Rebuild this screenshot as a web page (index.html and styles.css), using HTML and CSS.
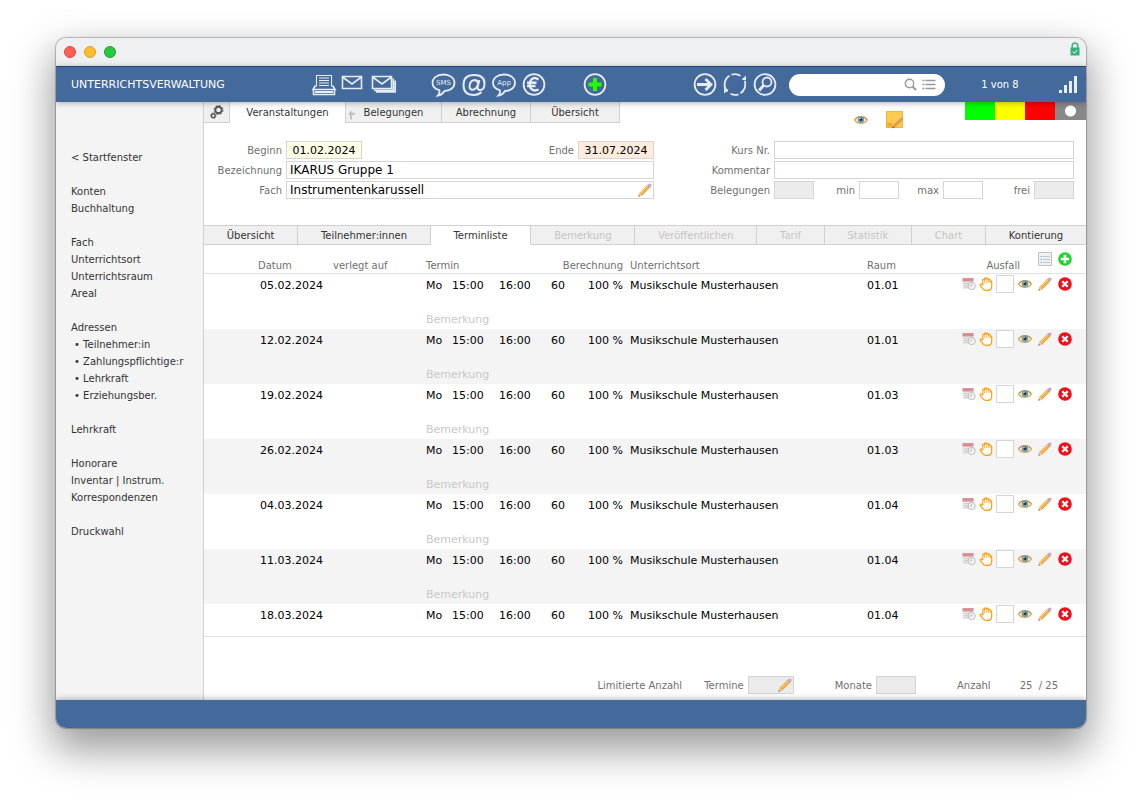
FILE: index.html
```
<!DOCTYPE html>
<html lang="de">
<head>
  <meta charset="UTF-8">
  <meta name="viewport" content="width=device-width, initial-scale=1.0">
  <title>Unterrichtsverwaltung</title>
  <link rel="stylesheet" href="styles.css">
</head>
<body>
  <!-- shared icons -->
  <svg class="sprite" aria-hidden="true">
    <symbol id="i-eye" viewBox="0 0 14 10">
      <path d="M.5 5C3 1 10.500 .6 13.500 4.800 10.500 9.400 3.500 9.400 .5 5z" fill="#f3e6cd" stroke="#dba95a" stroke-width="1.300"/>
      <path d="M1 4.200C3.500 .8 10 .6 13 4.200" fill="none" stroke="#c08f4a"/>
      <circle cx="7" cy="4.800" r="3.200" fill="#6d9bb0"/>
      <circle cx="7" cy="4.700" r="1.400" fill="#1c323c"/>
      <circle cx="6" cy="3.600" r=".6" fill="#fff"/>
    </symbol>
    <symbol id="i-pencil" viewBox="0 0 14 14">
      <path d="M.6 13.400L1.600 10 10.200 1.400 12.700 3.800 4 12.400z" fill="#f4ab3d" stroke="#d09a50" stroke-width=".4"/>
      <path d="M2.400 10.600L10.800 2.200" stroke="#fbd58b"/>
      <path d="M.5 13.500L1.700 10.300 3.700 12.300z" fill="#ecd9c0"/>
      <path d="M.4 13.600L1 12l1 1z" fill="#555"/>
      <path d="M9.500 2.200L11 .8q1-.8 2.100.2t0 2.300L11.700 4.700z" fill="#cfa3cf"/>
      <path d="M9.400 2.400l2.200 2.200" stroke="#aab" stroke-width=".8"/>
    </symbol>
    <symbol id="i-delete" viewBox="0 0 14 14">
      <circle cx="7" cy="7" r="6.800" fill="#f0101a"/>
      <path d="M4.300 4.300l5.400 5.400M9.700 4.300L4.300 9.700" stroke="#fff" stroke-width="2.300"/>
    </symbol>
    <symbol id="i-add" viewBox="0 0 14 14">
      <circle cx="7" cy="7" r="6.800" fill="#1fd32b"/>
      <path d="M7 2.800v8.400M2.800 7h8.400" stroke="#fff" stroke-width="2.600"/>
    </symbol>
    <symbol id="i-hand" viewBox="0 0 14 15">
      <path d="M3.600 8.500V3.200q0-.9.900-.9t.9.900V2q0-1 1-1t1 1v.3q0-.9 1-.9t1 .9v1q.1-.8 1-.8t1 .9V5q.1-.7.900-.7t.8.900V10q0 4.300-4.300 4.300H7q-2 0-3.200-1.600L.8 9Q.4 8.200 1 7.700t1.400 0z" fill="#fff" stroke="#f90" stroke-width="1.200" stroke-linejoin="round"/>
      <path d="M5.400 3v3.500M7.400 2.500v4M9.400 3v3.500M11.400 4.500v2.500" stroke="#fa3" stroke-width=".8"/>
    </symbol>
    <symbol id="i-calendar" viewBox="0 0 14 14">
      <path d="M.5 1h11v11H.5z" fill="#e6e6e6"/>
      <path d="M.5 1h11v3.500H.5z" fill="#dd8b92"/>
      <path d="M1 1.500h10" stroke="#c9a5a8" stroke-dasharray="1 1"/>
      <path d="M2 6.500h7M2 8.500h5M2 10.300h4" stroke="#d0d0d0"/>
      <circle cx="9.700" cy="9" r="3.600" fill="#f5f5f5" stroke="#bbb"/>
      <path d="M9.700 6.800V9h-2" fill="none" stroke="#b5b5b5" stroke-width=".9"/>
    </symbol>
    <symbol id="i-list" viewBox="0 0 14 14">
      <rect x=".5" y=".5" width="13" height="13" rx=".5" fill="#eef1f4" stroke="#bfc1c4"/>
      <path d="M5 4.500h7M5 7.500h7M5 10.500h7" stroke="#b4bfca" stroke-width=".8"/>
      <path d="M2.500 4.500h1.500M2.500 7.500h1.500M2.500 10.500h1.500" stroke="#86aed8"/>
    </symbol>
  </svg>

  <div class="window">
    <div class="titlebar">
      <span class="dot red"></span>
      <span class="dot orange"></span>
      <span class="dot green"></span>
      <svg class="lock" viewBox="0 0 10 14">
        <path d="M2.200 6V4q0-3 2.800-3t2.800 3v2" fill="none" stroke="#35b07e" stroke-width="1.500"/>
        <rect x=".5" y="5.500" width="9" height="8" fill="#35b07e"/>
        <path d="M2.800 9.600l1.600 1.600 2.800-3.200" fill="none" stroke="#fff"/>
      </svg>
    </div>

    <header class="toolbar">
      <h1>UNTERRICHTSVERWALTUNG</h1>
      <div class="tools">
        <button aria-label="Drucken"><svg class="thin" viewBox="0 0 30 30">
          <path d="M7.500 16.500v-11h15v11M10 8h10M10 10.500h10M10 13h10M10 15.500h10"/>
          <path d="M6.500 15.500L4 19.500h22l-2.500-4M4.500 19.500v5h21v-5" stroke-width="1.600"/>
          <path d="M6 22h18" stroke-width="2"/>
        </svg></button>
        <button aria-label="E-Mail"><svg viewBox="0 0 30 30">
          <path d="M3.500 6.500h19v12h-19zM3.500 7l9.500 7L22.500 7" stroke-width="1.600"/>
        </svg></button>
        <button aria-label="Serien-E-Mail"><svg viewBox="0 0 30 30">
          <path d="M3.500 6.500h19v12h-19zM3.500 7l9.500 7L22.500 7" stroke-width="1.600"/>
          <path d="M5 20.300h19.300V8.500M7 22h19.200V10.500" stroke-width="1.700"/>
        </svg></button>
      </div>
      <div class="tools messages">
        <button aria-label="SMS"><svg viewBox="0 0 30 30">
          <path d="M14.500 4.500c6.500 0 11 3.500 11 8.300s-4.500 8.200-10 8.200q-2.500 4-6.500 4.500 2-2 1.300-5.300C6 19 3.500 16.500 3.500 12.800c0-4.800 4.500-8.300 11-8.300z"/>
          <text x="14.500" y="15" text-anchor="middle">SMS</text>
        </svg></button>
        <button aria-label="At"><svg viewBox="0 0 30 30">
          <path d="M22.500 22q-3 3-7.500 3Q4.500 25 4.500 15T15 5q10.500 0 10.500 8.500 0 6.500-4.500 6.500-3 0-2.200-3.500L20.300 10M19 13.500Q18.500 10 15.500 10q-4.500.5-5 6 0 3.800 3 3.800 4-.3 5.300-5" stroke-width="2"/>
        </svg></button>
        <button aria-label="App"><svg viewBox="0 0 30 30">
          <path d="M15 4.500c6.500 0 11 3.500 11 8.300S21.500 21 16 21q-2.500 4-6.500 4.500 2-2 1.300-5.300C6.500 19 4 16.500 4 12.800c0-4.800 4.500-8.300 11-8.300z"/>
          <text x="15" y="15" text-anchor="middle">App</text>
        </svg></button>
        <button aria-label="Euro"><svg viewBox="0 0 30 30">
          <circle cx="15" cy="14.500" r="10.400"/>
          <path d="M19.500 9.500q-6-4-8.500 2.500-1 3 .5 6 3 4 8 1.500M8 12.800h9.500M8 16h8.500" stroke-width="2.400"/>
        </svg></button>
      </div>
      <div class="tools new">
        <button aria-label="Neu"><svg viewBox="0 0 30 30">
          <circle cx="15" cy="14.500" r="10.400"/>
          <path d="M15 8v13M8.500 14.500h13" stroke="#2f0" stroke-width="4"/>
        </svg></button>
      </div>
      <div class="tools navigate">
        <button aria-label="Weiter"><svg viewBox="0 0 30 30">
          <circle cx="15" cy="14.500" r="10.400"/>
          <path d="M7 14.500h14M15.500 9l5.500 5.500-5.500 5.500" stroke-width="2.800"/>
        </svg></button>
        <button aria-label="Aktualisieren"><svg viewBox="0 0 30 30">
          <path d="M7.500 21.700A10.400 10.400 0 0 1 9.500 5.700M11.500 4.700A10.400 10.400 0 0 1 20.500 5.700M24.800 11A10.400 10.400 0 0 1 20.500 23.300M18.500 24.300A10.400 10.400 0 0 1 10.500 23.800"/>
          <path d="M21.500 9.500l4.500 1V5.500zM8.500 19.500l-4.500-1v5z" fill="#e6edf7" stroke="none"/>
        </svg></button>
        <button aria-label="Suchen"><svg viewBox="0 0 30 30">
          <circle cx="15" cy="14.500" r="10.400"/>
          <circle cx="17" cy="12" r="4.500"/>
          <path d="M13.800 15.300L9 20.500" stroke-width="2.800"/>
        </svg></button>
      </div>
      <label class="search">
        <input type="search" aria-label="Suche">
        <svg viewBox="0 0 34 14">
          <circle cx="6.500" cy="5.500" r="4.200"/>
          <path d="M9.500 8.500L13 12" stroke-width="2"/>
          <path d="M22.500 2.500h10M22.500 6.500h10M22.500 10.500h10M19.500 2.500h2M19.500 6.500h2M19.500 10.500h2"/>
        </svg>
      </label>
      <span class="count">1 von 8</span>
      <svg class="signal" viewBox="0 0 20 20">
        <path d="M1 15h3v3H1zM6 10h3v8H6zM11 6h3v12h-3zM16 1h3v17h-3z"/>
      </svg>
    </header>

    <div class="content">
      <nav class="sidebar">
        <ul>
          <li><a href="#">&lt; Startfenster</a></li>
        </ul>
        <ul>
          <li><a href="#">Konten</a></li>
          <li><a href="#">Buchhaltung</a></li>
        </ul>
        <ul>
          <li><a href="#">Fach</a></li>
          <li><a href="#">Unterrichtsort</a></li>
          <li><a href="#">Unterrichtsraum</a></li>
          <li><a href="#">Areal</a></li>
        </ul>
        <ul>
          <li><a href="#">Adressen</a></li>
          <li class="sub"><a href="#">• Teilnehmer:in</a></li>
          <li class="sub"><a href="#">• Zahlungspflichtige:r</a></li>
          <li class="sub"><a href="#">• Lehrkraft</a></li>
          <li class="sub"><a href="#">• Erziehungsber.</a></li>
        </ul>
        <ul>
          <li><a href="#">Lehrkraft</a></li>
        </ul>
        <ul>
          <li><a href="#">Honorare</a></li>
          <li><a href="#">Inventar | Instrum.</a></li>
          <li><a href="#">Korrespondenzen</a></li>
        </ul>
        <ul>
          <li><a href="#">Druckwahl</a></li>
        </ul>
      </nav>

      <main>
        <div class="top">
          <div class="main-tabs">
            <button aria-label="Einstellungen"><svg class="gears" viewBox="0 0 14 14">
              <circle cx="8.500" cy="5" r="3.200" stroke-width="1.900"/>
              <circle cx="8.500" cy="5" r="4.500" stroke-width="1" stroke-dasharray="1.800 1.730"/>
              <circle cx="3.300" cy="10.700" r="1.900" stroke-width="1.400"/>
              <circle cx="3.300" cy="10.700" r="2.800" stroke-width=".7" stroke-dasharray="1.100 1.100"/>
            </svg></button>
            <button class="active">Veranstaltungen</button>
            <button>
              <svg class="turn" viewBox="0 0 8 10"><path d="M3 9.500V5.500q0-2 4-2" fill="none" stroke="#c4c4c4" stroke-width="2"/><path d="M0 5l3-4.500L5.500 5z" fill="#c4c4c4"/></svg>
              Belegungen
            </button>
            <button>Abrechnung</button>
            <button>Übersicht</button>
          </div>
          <div class="marks">
            <svg class="eye"><use href="#i-eye"/></svg>
            <svg class="note" viewBox="0 0 18 18">
              <rect x=".5" y=".5" width="16" height="16" fill="#fccb50" stroke="#e8b74a"/>
              <path d="M1 11.500h4.500l1 1V16.500H1z" fill="#f5b428"/>
              <path d="M2 12.500q2 2 4 1.500" fill="none" stroke="#d99a20" stroke-width=".7"/>
              <path d="M6.500 17L8 13.500l7-6.300 1.700 1.500L9.500 15.500z" fill="#f59a4a" stroke="#b98d60" stroke-width=".5"/>
              <path d="M6.300 17.200l.8-1.900 1.200 1.100z" fill="#555"/>
              <path d="M14.700 7.300l1.500-1.300 1.700 1.400-1.400 1.400z" fill="#c9a0d4"/>
            </svg>
          </div>
          <div class="status">
            <span class="go"></span>
            <span class="wait"></span>
            <span class="stop"></span>
            <span class="off"></span>
          </div>
        </div>

        <form class="course">
          <div class="fields">
            <label for="begin">Beginn</label>
            <div class="line">
              <input id="begin" class="date begin" value="01.02.2024">
              <label for="end">Ende</label>
              <input id="end" class="date end" value="31.07.2024">
            </div>
            <label for="name">Bezeichnung</label>
            <input id="name" class="big" value="IKARUS Gruppe 1">
            <label for="subject">Fach</label>
            <div class="with-icon">
              <input id="subject" class="big" value="Instrumentenkarussell">
              <svg class="pencil"><use href="#i-pencil"/></svg>
            </div>
          </div>
          <div class="fields right">
            <label for="number">Kurs Nr.</label>
            <input id="number">
            <label for="comment">Kommentar</label>
            <input id="comment">
            <label for="booked">Belegungen</label>
            <div class="counts">
              <input id="booked" class="small" disabled>
              <label for="min">min</label>
              <input id="min" class="small">
              <label for="max">max</label>
              <input id="max" class="small">
              <label for="free">frei</label>
              <input id="free" class="small" disabled>
            </div>
          </div>
        </form>

        <div class="sub-tabs">
          <button>Übersicht</button>
          <button>Teilnehmer:innen</button>
          <button class="active">Terminliste</button>
          <button disabled>Bemerkung</button>
          <button disabled>Veröffentlichen</button>
          <button disabled>Tarif</button>
          <button disabled>Statistik</button>
          <button disabled>Chart</button>
          <button>Kontierung</button>
        </div>

        <div class="list">
          <table>
            <colgroup>
              <col class="c-pad"><col class="c-date"><col class="c-moved"><col class="c-day">
              <col class="c-from"><col class="c-to"><col class="c-min"><col class="c-rate">
              <col><col class="c-room"><col class="c-actions">
            </colgroup>
            <thead>
              <tr>
                <th></th>
                <th>Datum</th>
                <th>verlegt auf</th>
                <th colspan="3">Termin</th>
                <th colspan="2" class="rate">Berechnung</th>
                <th>Unterrichtsort</th>
                <th>Raum</th>
                <th>
                  <div class="head-actions">
                    <span>Ausfall</span>
                    <button aria-label="Liste"><svg><use href="#i-list"/></svg></button>
                    <button aria-label="Termin hinzufügen"><svg><use href="#i-add"/></svg></button>
                  </div>
                </th>
              </tr>
            </thead>
          </table>
        </div>

        <div class="summary">
          <span>Limitierte Anzahl</span>
          <label for="dates">Termine</label>
          <div class="with-icon">
            <input id="dates" class="limit" disabled>
            <svg class="pencil"><use href="#i-pencil"/></svg>
          </div>
          <label for="months" class="months">Monate</label>
          <input id="months" class="small" disabled>
          <span class="total">Anzahl</span>
          <span>25 &nbsp;/ 25</span>
        </div>
      </main>
    </div>
    <footer></footer>
  </div>

  <script>
    const dates = [
      ['05.02.2024', '01.01'],
      ['12.02.2024', '01.01'],
      ['19.02.2024', '01.03'],
      ['26.02.2024', '01.03'],
      ['04.03.2024', '01.04'],
      ['11.03.2024', '01.04'],
      ['18.03.2024', '01.04']
    ];
    const table = document.querySelector('.list table');
    const icon = (name, label) =>
      `<button aria-label="${label}"><svg><use href="#i-${name}"/></svg></button>`;

    dates.forEach(([date, room]) => {
      const body = document.createElement('tbody');
      body.innerHTML = `
        <tr>
          <td></td>
          <td class="date-cell">${date}</td>
          <td></td>
          <td>Mo</td>
          <td>15:00</td>
          <td>16:00</td>
          <td>60</td>
          <td class="rate">100 %</td>
          <td>Musikschule Musterhausen</td>
          <td>${room}</td>
          <td>
            <div class="actions">
              ${icon('calendar', 'Verlegen')}
              ${icon('hand', 'Sperren')}
              <input type="checkbox" aria-label="Ausfall ${date}">
              <div class="edit">
                ${icon('eye', 'Ansehen')}
                ${icon('pencil', 'Bearbeiten')}
                ${icon('delete', 'Löschen')}
              </div>
            </div>
          </td>
        </tr>
        <tr class="remark">
          <td colspan="3"></td>
          <td colspan="8"><input placeholder="Bemerkung" aria-label="Bemerkung ${date}"></td>
        </tr>`;
      table.appendChild(body);
    });
  </script>
</body>
</html>
```
FILE: styles.css
```
* {
  margin: 0;
  padding: 0;
  box-sizing: border-box;
}

body {
  height: 100vh;
  padding: 38px 56px 74px;
  background-color: #fff;
  font-family: "DejaVu Sans", Verdana, sans-serif;
  font-size: 10px;
  color: #333;
}

button, input {
  font: inherit;
  color: inherit;
}

button {
  border: none;
  background: none;
  cursor: pointer;
}

button svg {
  display: block;
}

a {
  color: inherit;
  text-decoration: none;
}

.sprite {
  position: absolute;
  width: 0;
  height: 0;
}

.window {
  display: flex;
  flex-direction: column;
  height: 100%;
  border-radius: 10px;
  overflow: hidden;
  box-shadow: 0 0 1px 1px rgba(0, 0, 0, 0.25), 0 18px 40px 4px rgba(0, 0, 0, 0.4);
}

.titlebar {
  display: flex;
  align-items: center;
  gap: 8px;
  height: 28px;
  padding: 0 6px 0 8px;
  background-color: #eff0f2;
}

.dot {
  width: 12px;
  height: 12px;
  border-radius: 50%;
}

.red {
  background-color: #ff5f57;
  border: 1px solid #e2463f;
}

.orange {
  background-color: #febc2e;
  border: 1px solid #e09e21;
}

.green {
  background-color: #28c840;
  border: 1px solid #16a82c;
}

.lock {
  width: 10px;
  height: 14px;
  margin: 0 0 6px auto;
}

.toolbar {
  display: flex;
  align-items: center;
  height: 36px;
  flex-shrink: 0;
  padding: 0 3px 0 15px;
  background-color: #44699b;
  border-top: 1px solid #1f427a;
  color: #fff;
  position: relative;
  z-index: 1;
  box-shadow: 0 1px 6px rgba(0, 0, 0, 0.3);
}

.toolbar h1 {
  width: 238px;
  font-size: 11px;
  font-weight: normal;
}

.tools {
  display: flex;
}

.tools svg {
  width: 30px;
  height: 30px;
  fill: none;
  stroke: #e6edf7;
  stroke-width: 1.8;
}

.tools .thin {
  stroke-width: 1.1;
}

.tools text {
  font-size: 7px;
  fill: #e6edf7;
  stroke: none;
}

.messages {
  margin-left: 30px;
}

.new {
  margin-left: 31px;
}

.navigate {
  margin-left: auto;
}

.search {
  display: flex;
  align-items: center;
  width: 156px;
  height: 22px;
  margin-left: 9px;
  padding: 0 8px 0 12px;
  border-radius: 11px;
  background-color: #fff;
}

.search input {
  flex: 1;
  min-width: 0;
  border: none;
  outline: none;
  background: none;
  color: #333;
}

.search svg {
  width: 34px;
  height: 14px;
  fill: none;
  stroke: #999;
  stroke-width: 1.4;
}

.count {
  width: 110px;
  text-align: center;
}

.signal {
  width: 20px;
  height: 20px;
  margin: 0 5px 0 3px;
  fill: #e9eff8;
}

.content {
  display: flex;
  flex: 1;
  min-height: 0;
}

.sidebar {
  width: 148px;
  flex-shrink: 0;
  padding: 47px 0 0 15px;
  background-color: #f4f4f4;
  border-right: 1px solid #d0d0d0;
  line-height: 17px;
}

.sidebar ul {
  margin-bottom: 17px;
  list-style: none;
}

.sidebar .sub {
  padding-left: 3px;
}

main {
  display: flex;
  flex-direction: column;
  flex: 1;
  min-width: 0;
  background-color: #fff;
}

.top {
  display: flex;
  align-items: flex-start;
  height: 39px;
}

.main-tabs {
  display: grid;
  grid-template-columns: 26px 116px 96px 89px 89px;
}

.main-tabs button {
  display: flex;
  align-items: center;
  justify-content: center;
  position: relative;
  height: 21px;
  background-color: #f0f0f0;
  border-right: 1px solid #d0d0d0;
  border-bottom: 1px solid #d0d0d0;
}

.main-tabs .active {
  background-color: #fff;
  border-bottom: none;
}

.gears {
  width: 14px;
  height: 14px;
  fill: none;
  stroke: #555;
}

.turn {
  position: absolute;
  left: 2px;
  bottom: 2px;
  width: 8px;
  height: 10px;
}

.marks {
  display: flex;
  align-items: center;
  gap: 18px;
  margin: 9px 61px 0 auto;
}

.eye {
  width: 14px;
  height: 10px;
}

.note {
  width: 18px;
  height: 18px;
}

.status {
  display: flex;
  height: 18px;
}

.status span {
  width: 30px;
}

.go {
  background-color: #0f0;
}

.wait {
  background-color: #ff0;
}

.stop {
  background-color: #f00;
}

.status .off {
  width: 31px;
  background: radial-gradient(circle, #fff 5px, #888 6px);
}

.course {
  display: flex;
  height: 84px;
  padding-right: 12px;
  color: #707070;
}

.fields {
  display: grid;
  grid-template-columns: 78px 1fr;
  grid-auto-rows: 18px;
  gap: 2px 4px;
  flex: 450;
  align-items: center;
  align-content: start;
}

.fields.right {
  grid-template-columns: 116px 1fr;
  flex: 420;
}

.fields > label {
  text-align: right;
}

.fields input, .summary input {
  width: 100%;
  min-width: 0;
  height: 18px;
  padding: 0 3px;
  border: 1px solid #d5d5d5;
  background-color: #fff;
  color: #000;
  font-size: 11px;
}

.line {
  display: flex;
  align-items: center;
}

.fields .date {
  width: 76px;
  text-align: center;
}

.fields .begin {
  background-color: #ffffe6;
}

.fields .end {
  background-color: #ffecdc;
}

.line .begin {
  margin-right: auto;
}

.line .end {
  margin-left: 4px;
}

.fields .big {
  font-size: 12px;
}

.fields .small, .summary .small {
  width: 40px;
}

.counts {
  display: grid;
  grid-template-columns: 40px 37px 40px 36px 40px 1fr 40px;
  column-gap: 4px;
  align-items: center;
  text-align: right;
}

.fields input:disabled, .summary input:disabled {
  background-color: #ebebeb;
}

.with-icon {
  position: relative;
}

.with-icon input {
  display: block;
}

.pencil {
  position: absolute;
  top: 2px;
  right: 2px;
  width: 14px;
  height: 14px;
}

.sub-tabs {
  display: flex;
  height: 20px;
  flex-shrink: 0;
}

.sub-tabs button {
  flex: 1 0 auto;
  padding: 0 22px;
  background-color: #f0f0f0;
  border: 1px solid #d0d0d0;
  border-left: none;
}

.sub-tabs button:last-child {
  border-right: none;
}

.sub-tabs .active {
  background-color: #fff;
  border-bottom-color: #fff;
}

.sub-tabs button:disabled {
  color: #c4c4c4;
}

.list {
  flex: 1;
  min-height: 0;
  overflow: hidden;
  border-bottom: 1px solid #e2e2e2;
}

table {
  width: 100%;
  table-layout: fixed;
  border-spacing: 0;
}

.c-pad { width: 54px; }
.c-date { width: 75px; }
.c-moved { width: 93px; }
.c-day { width: 26px; }
.c-from { width: 47px; }
.c-to { width: 52px; }
.c-min { width: 24px; }
.c-rate { width: 55px; }
.c-room { width: 95px; }
.c-actions { width: 124px; }

th {
  height: 29px;
  padding-bottom: 2px;
  border-bottom: 1px solid #e2e2e2;
  color: #707070;
  font-weight: normal;
  text-align: left;
  vertical-align: bottom;
}

td {
  height: 22px;
  color: #000;
  font-size: 11px;
  white-space: nowrap;
}

.date-cell {
  padding-left: 2px;
}

.rate {
  padding-right: 7px;
  text-align: right;
}

tbody:nth-of-type(even) {
  background-color: #f4f4f4;
}

.remark td {
  height: 33px;
}

.remark input {
  display: block;
  width: 100%;
  height: 20px;
  margin-top: 13px;
  border: none;
  background: none;
}

.remark input::placeholder {
  color: #c8c8c8;
}

.head-actions {
  display: flex;
  align-items: flex-end;
  gap: 6px;
  padding-right: 14px;
}

.head-actions span {
  margin: 0 12px 0 auto;
}

.head-actions button {
  margin-bottom: 5px;
}

.head-actions svg, .actions svg {
  width: 14px;
  height: 14px;
}

.actions {
  display: flex;
  align-items: center;
  gap: 3px;
  height: 20px;
  margin-bottom: 2px;
}

.edit {
  display: flex;
  gap: 6px;
  margin-left: 1px;
}

.actions input {
  appearance: none;
  width: 18px;
  height: 18px;
  border: 1px solid #d5d5d5;
  background-color: #fff;
}

.summary {
  display: flex;
  align-items: center;
  justify-content: flex-end;
  gap: 4px;
  height: 63px;
  padding: 33px 28px 0 0;
  color: #707070;
}

.summary label {
  margin-left: 18px;
}

.summary .limit {
  width: 46px;
}

.summary .months {
  margin-left: 37px;
}

.summary .total {
  margin: 0 25px 0 37px;
}

footer {
  height: 28px;
  flex-shrink: 0;
  background-color: #44699b;
  box-shadow: 0 -1px 6px rgba(0, 0, 0, 0.3);
  position: relative;
}
```
